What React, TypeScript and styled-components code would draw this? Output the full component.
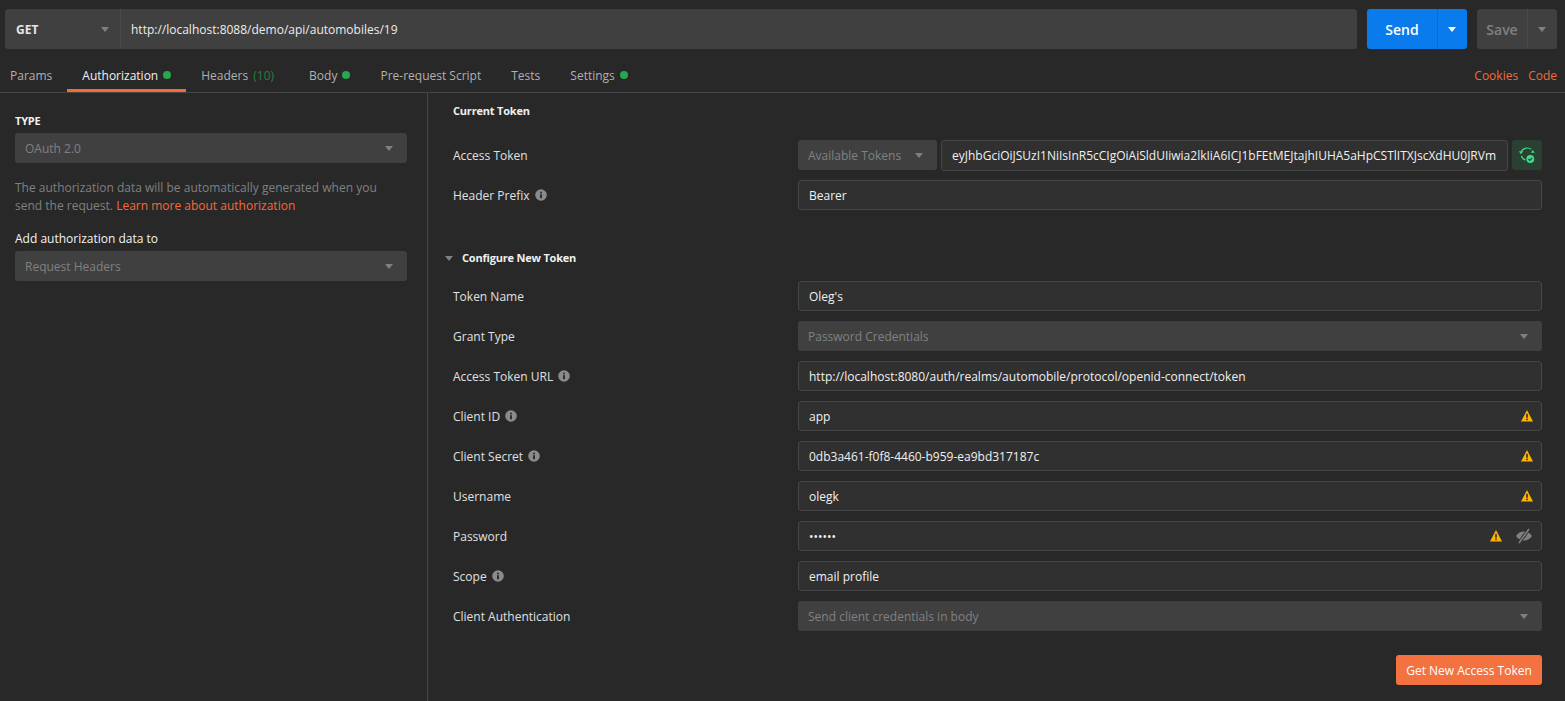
import styled, { createGlobalStyle } from "styled-components";

const GlobalStyle = createGlobalStyle`
  html, body {
    margin: 0;
    padding: 0;
    height: 100%;
    background: #282828;
    overflow: hidden;
  }
  body {
    font-family: "Open Sans", "Noto Sans", sans-serif;
    font-size: 12px;
    color: #f0f0f0;
  }
`;

const Page = styled.div`
  width: 1565px;
  height: 701px;
  display: flex;
  flex-direction: column;
  background: #282828;
`;

const RequestBar = styled.div`
  display: flex;
  height: 40px;
  margin: 9px 8px 0 5px;
  gap: 10px;
`;

const UrlBox = styled.div`
  flex: 1;
  display: flex;
  background: #404040;
  border-radius: 3px;
`;

const MethodSelect = styled.div`
  width: 116px;
  flex: none;
  display: flex;
  align-items: center;
  justify-content: space-between;
  padding: 0 11px 0 11px;
  box-sizing: border-box;
  font-weight: 700;
  color: #e6e6e6;
  border-right: 1px solid #4a4a4a;
`;

const UrlText = styled.div`
  padding-left: 10px;
  display: flex;
  align-items: center;
  color: #ececec;
`;

const SplitButton = styled.div<{ $primary?: boolean }>`
  display: flex;
  width: ${(p) => (p.$primary ? "100px" : "80px")};
  background: ${(p) => (p.$primary ? "#097bed" : "#404040")};
  color: ${(p) => (p.$primary ? "#ffffff" : "#808080")};
  border-radius: 3px;
  font-size: 14px;
  font-weight: 600;
`;

const SplitLabel = styled.div<{ $primary?: boolean }>`
  flex: 1;
  display: flex;
  align-items: center;
  justify-content: center;
  border-right: 1px solid ${(p) => (p.$primary ? "#0a6bcc" : "#4a4a4a")};
`;

const SplitCaret = styled.div`
  width: 29px;
  box-sizing: border-box;
  padding-right: 2px;
  display: flex;
  align-items: center;
  justify-content: center;
`;

const Caret = styled.span<{ $color?: string }>`
  flex: none;
  width: 0;
  height: 0;
  border-left: 4px solid transparent;
  border-right: 4px solid transparent;
  border-top: 5px solid ${(p) => p.$color || "#808080"};
`;

const TabBar = styled.div`
  display: flex;
  justify-content: space-between;
  height: 43px;
  padding: 0 8px 0 10px;
  border-bottom: 1px solid #464646;
  flex: none;
`;

const TabList = styled.div`
  display: flex;
`;

const Tab = styled.div<{ $active?: boolean; $extra?: number }>`
  display: flex;
  align-items: center;
  gap: 5px;
  padding: 12px ${(p) => 15 + (p.$extra || 0)}px 0 15px;
  color: ${(p) => (p.$active ? "#f0f0f0" : "#b0b0b0")};
  border-bottom: 3px solid ${(p) => (p.$active ? "#f26b3a" : "transparent")};
  &:first-child {
    padding-left: 0;
  }
`;

const Dot = styled.span`
  width: 8px;
  height: 8px;
  border-radius: 50%;
  background: #26a84f;
`;

const Count = styled.span`
  margin-left: 2px;
  color: #21803f;
`;

const TabLinks = styled.div`
  display: flex;
  gap: 10px;
  align-items: center;
  padding-top: 12px;
  padding-bottom: 3px;
  color: #f26b3a;
`;

const Body = styled.div`
  flex: 1;
  display: flex;
  min-height: 0;
`;

const Sidebar = styled.div`
  width: 428px;
  flex: none;
  box-sizing: border-box;
  padding: 20px 20px 0 15px;
  border-right: 1px solid #464646;
`;

const TypeLabel = styled.div`
  font-size: 11px;
  font-weight: 700;
  line-height: 16px;
  letter-spacing: -0.2px;
  color: #f0f0f0;
  margin-bottom: 4px;
`;

const Select = styled.div<{ $width?: string }>`
  display: flex;
  align-items: center;
  justify-content: space-between;
  height: 30px;
  box-sizing: border-box;
  padding: 0 14px 0 10px;
  background: #404040;
  border-radius: 3px;
  color: #808080;
  ${(p) => (p.$width ? `width: ${p.$width}; flex: none;` : "flex: 1;")}
`;

const Description = styled.p`
  margin: 16px 0 16px;
  line-height: 18px;
  color: #808080;
`;

const LearnLink = styled.span`
  color: #f26b3a;
`;

const SubLabel = styled.div`
  font-weight: 400;
  line-height: 16px;
  color: #f4f4f4;
  margin-bottom: 4px;
`;

const Main = styled.div`
  flex: 1;
  padding: 10px 23px 0 25px;
  display: flex;
  flex-direction: column;
`;

const SectionTitle = styled.div`
  font-size: 11px;
  font-weight: 700;
  line-height: 16px;
  letter-spacing: -0.2px;
  color: #f0f0f0;
  margin-bottom: 21px;
`;

const ConfigureTitle = styled(SectionTitle)`
  display: flex;
  align-items: center;
  gap: 9px;
  margin: 30px 0 15px -8px;
`;

const Row = styled.div`
  display: flex;
  align-items: center;
  height: 30px;
  margin-bottom: 10px;
`;

const Label = styled.div`
  width: 345px;
  flex: none;
  display: flex;
  align-items: center;
  gap: 5px;
  color: #e0e0e0;
`;

const Input = styled.div`
  flex: 1;
  min-width: 0;
  height: 30px;
  box-sizing: border-box;
  display: flex;
  align-items: center;
  justify-content: space-between;
  padding: 0 8px 0 10px;
  background: #303030;
  border: 1px solid #464646;
  border-radius: 3px;
  color: #f0f0f0;
`;

const TokenInput = styled(Input)`
  height: 31px;
  margin: 0 4px;
`;

const Clipped = styled.span`
  white-space: nowrap;
  overflow: hidden;
`;

const InputIcons = styled.div`
  display: flex;
  align-items: center;
  gap: 13px;
  flex: none;
`;

const RenewButton = styled.div`
  width: 30px;
  height: 30px;
  flex: none;
  display: flex;
  align-items: center;
  justify-content: center;
  border-radius: 3px;
  background: #2a4033;
`;

const Footer = styled.div`
  display: flex;
  justify-content: flex-end;
  margin-top: 14px;
`;

const PrimaryButton = styled.div`
  width: 146px;
  height: 30px;
  display: flex;
  align-items: center;
  justify-content: center;
  border-radius: 3px;
  background: #f47140;
  color: #ffffff;
`;

const InfoIcon = () => (
  <svg width="12" height="12" viewBox="0 0 12 12">
    <circle cx="6" cy="6" r="5.8" fill="#8a8a8a" />
    <rect x="5" y="5.2" width="2" height="4" fill="#303030" />
    <rect x="5" y="2.8" width="2" height="1.5" fill="#303030" />
  </svg>
);

const WarnIcon = () => (
  <svg width="12" height="12" viewBox="0 0 12 12">
    <path d="M6 0 12 11.500H0z" fill="#ffb400" />
    <rect x="5.200" y="3.800" width="1.600" height="4" fill="#303030" />
    <rect x="5.200" y="8.600" width="1.600" height="1.600" fill="#303030" />
  </svg>
);

const EyeOffIcon = () => (
  <svg width="18" height="16" viewBox="0 0 18 16">
    <path
      d="M1 8c2-3 4.800-4.400 8-4.400S15 5 17 8c-2 3-4.800 4.400-8 4.400S3 11 1 8z"
      fill="#808080"
    />
    <circle cx="9" cy="8" r="2" fill="#5a5a5a" />
    <path d="M14 1 4 15" stroke="#303030" strokeWidth="3.400" />
    <path d="M14 1 4 15" stroke="#808080" strokeWidth="1.600" />
  </svg>
);

const RenewIcon = () => (
  <svg width="18" height="18" viewBox="0 0 18 18" fill="none">
    <path d="M3.200 5.500C4.500 2.800 9.500 .4 13.200 3.400" stroke="#3ddc84" strokeWidth="1.200" />
    <path d="M3.400 9.800C4 11.800 5.500 13.400 7.600 14" stroke="#3ddc84" strokeWidth="1.200" />
    <path d="M.8 5.200h4.400L3 8.200z" fill="#3ddc84" />
    <path d="M12.800 6.800h4L14.800 4z" fill="#3ddc84" />
    <circle cx="12.300" cy="13" r="3.900" fill="#3ddc84" />
    <path d="m10.400 13 1.400 1.400 2.400-2.600" stroke="#2a4033" strokeWidth="1.200" />
  </svg>
);

type Field = {
  label: string;
  value: string;
  info?: boolean;
  warn?: boolean;
  select?: boolean;
  eye?: boolean;
};

const fields: Field[] = [
  { label: "Token Name", value: "Oleg's" },
  { label: "Grant Type", value: "Password Credentials", select: true },
  {
    label: "Access Token URL",
    value: "http://localhost:8080/auth/realms/automobile/protocol/openid-connect/token",
    info: true,
  },
  { label: "Client ID", value: "app", info: true, warn: true },
  { label: "Client Secret", value: "0db3a461-f0f8-4460-b959-ea9bd317187c", info: true, warn: true },
  { label: "Username", value: "olegk", warn: true },
  { label: "Password", value: "••••••", warn: true, eye: true },
  { label: "Scope", value: "email profile", info: true },
  { label: "Client Authentication", value: "Send client credentials in body", select: true },
];

const token =
  "eyJhbGciOiJSUzI1NiIsInR5cCIgOiAiSldUIiwia2lkIiA6ICJ1bFEtMEJtajhIUHA5aHpCSTlITXJscXdHU0JRVm";

const App = () => (
  <>
    <GlobalStyle />
    <Page>
      <RequestBar>
        <UrlBox>
          <MethodSelect>
            GET
            <Caret />
          </MethodSelect>
          <UrlText>http://localhost:8088/demo/api/automobiles/19</UrlText>
        </UrlBox>
        <SplitButton $primary>
          <SplitLabel $primary>Send</SplitLabel>
          <SplitCaret>
            <Caret $color="#ffffff" />
          </SplitCaret>
        </SplitButton>
        <SplitButton>
          <SplitLabel>Save</SplitLabel>
          <SplitCaret>
            <Caret />
          </SplitCaret>
        </SplitButton>
      </RequestBar>
      <TabBar>
        <TabList>
          <Tab>Params</Tab>
          <Tab $active>
            Authorization <Dot />
          </Tab>
          <Tab $extra={5}>
            <span>
              Headers <Count>(10)</Count>
            </span>
          </Tab>
          <Tab>
            Body <Dot />
          </Tab>
          <Tab>Pre-request Script</Tab>
          <Tab>Tests</Tab>
          <Tab>
            Settings <Dot />
          </Tab>
        </TabList>
        <TabLinks>
          <span>Cookies</span>
          <span>Code</span>
        </TabLinks>
      </TabBar>
      <Body>
        <Sidebar>
          <TypeLabel>TYPE</TypeLabel>
          <Select>
            OAuth 2.0
            <Caret />
          </Select>
          <Description>
            The authorization data will be automatically generated when you send the request.{" "}
            <LearnLink>Learn more about authorization</LearnLink>
          </Description>
          <SubLabel>Add authorization data to</SubLabel>
          <Select>
            Request Headers
            <Caret />
          </Select>
        </Sidebar>
        <Main>
          <SectionTitle>Current Token</SectionTitle>
          <Row>
            <Label>Access Token</Label>
            <Select $width="139px">
              Available Tokens
              <Caret />
            </Select>
            <TokenInput>
              <Clipped>{token}</Clipped>
            </TokenInput>
            <RenewButton>
              <RenewIcon />
            </RenewButton>
          </Row>
          <Row>
            <Label>
              Header Prefix <InfoIcon />
            </Label>
            <Input>Bearer</Input>
          </Row>
          <ConfigureTitle>
            <Caret />
            Configure New Token
          </ConfigureTitle>
          {fields.map((f) => (
            <Row key={f.label}>
              <Label>
                {f.label} {f.info && <InfoIcon />}
              </Label>
              {f.select ? (
                <Select>
                  {f.value}
                  <Caret />
                </Select>
              ) : (
                <Input>
                  {f.value}
                  {(f.warn || f.eye) && (
                    <InputIcons>
                      {f.warn && <WarnIcon />}
                      {f.eye && <EyeOffIcon />}
                    </InputIcons>
                  )}
                </Input>
              )}
            </Row>
          ))}
          <Footer>
            <PrimaryButton>Get New Access Token</PrimaryButton>
          </Footer>
        </Main>
      </Body>
    </Page>
  </>
);

export default App;
